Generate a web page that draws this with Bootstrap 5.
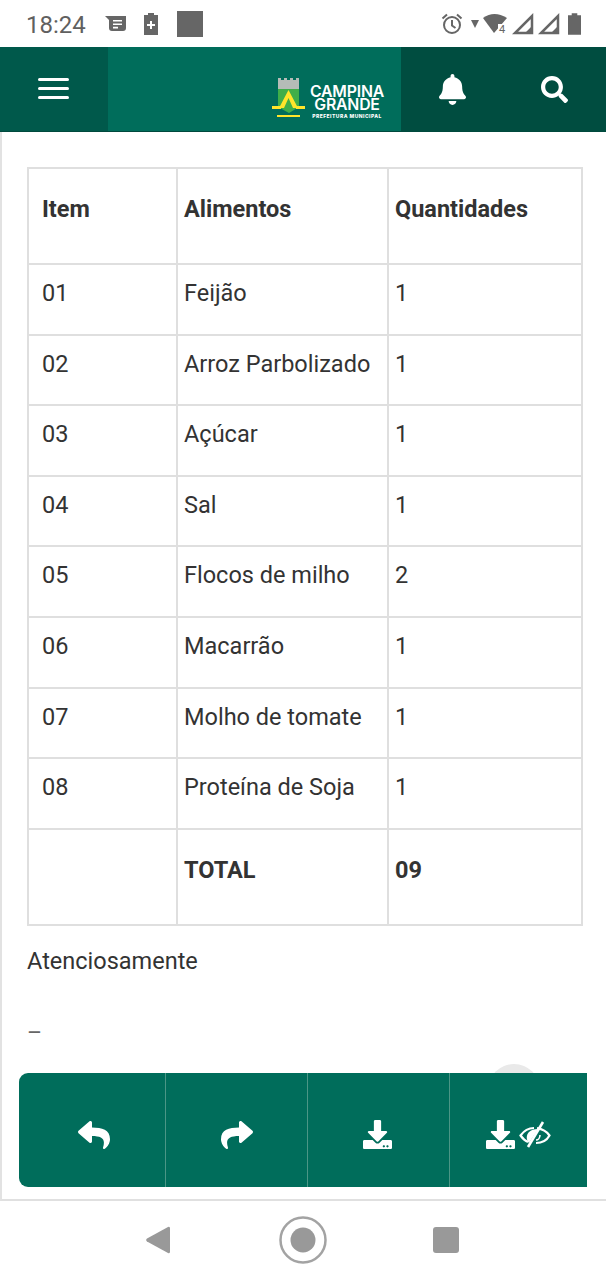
<!DOCTYPE html>
<html lang="pt-BR">
<head>
<meta charset="utf-8">
<title>Campina Grande</title>
<link rel="stylesheet" href="https://cdn.jsdelivr.net/npm/bootstrap@5.3.0/dist/css/bootstrap.min.css">
<style>
html,body{margin:0;padding:0;background:#fff}
.phone{width:606px;height:1280px;overflow:hidden;font-family:Roboto,"Liberation Sans",sans-serif;color:#333}
.statusbar{height:47px;padding:0 25px 0 26px;color:#666}
.clock{font-size:24px;line-height:47px;margin-top:3px;color:#606060;width:71px}
.sq-icon{margin-left:18px}
.topbar{height:85px;background:#006d5b;border-bottom:1px solid #00493d}
.menu-zone{width:108px;background:#00594b}
.logo-zone{width:293px;padding-right:17px}
.logo-mark{margin-top:19px}
.act-zone{width:205px;background:#004d40}
.act-zone>div{width:103px}
.brand-text{color:#fff;font-family:Inter,"Liberation Sans",sans-serif;text-align:center;margin-left:5px;margin-top:27px}
.brand-l{font-size:15.8px;font-weight:600;line-height:13.5px;letter-spacing:-.2px}
.brand-s{font-size:5px;font-weight:800;line-height:9px;letter-spacing:.45px}
.content{height:1069px;border-left:2px solid #e2e2e2;border-bottom:2px solid #e0e0e0;position:relative}
.frame{padding:35px 22px 0 25px}
.data-table{width:556px;table-layout:fixed;margin:0;border-collapse:collapse;font-size:23.5px;--bs-table-color:#333;--bs-table-border-color:#dfdfdf}
.data-table th,.data-table td{border:2px solid #dfdfdf;padding:12px 6px 0;line-height:32px;vertical-align:top;font-weight:400}
.data-table th{font-weight:700}
.data-table .c1{width:149px;padding-left:13px}
.data-table .c2{width:211px}
.head-row{height:96px}
.head-row th{padding-top:24px}
.item-row{height:70.6px}
.total-row{height:96px}
.total-row td{padding-top:24px}
.closing{font-size:23.5px;color:#333;line-height:32px;margin:19px 0 0}
.dash{font-size:23px;line-height:32px;margin:41px 0 0;color:#666}
.action-wrap{position:absolute;left:17px;top:941px;width:568px}
.ghost{position:absolute;left:469px;top:-9px;width:52px;height:52px;border-radius:50%;background:#e9e9e9}
.action-bar{position:relative;height:114px;background:#006d5b;border-radius:9px 0 0 9px;display:grid;grid-template-columns:147px 142px 142px 137px}
.action-bar>div{border-right:1px solid #4b9686;padding-top:9px}
.action-bar>div:last-child{border-right:0}
.reply-icon{margin-left:3px}
.dl-icon{margin-right:2px}
.softkeys{height:78px;padding-left:146px}
.sk-back{width:24px}
.sk-home{width:48px;margin-left:109px}
.sk-recent{width:26px;margin-left:106px}
.sig-first{margin-left:4px}
</style>
</head>
<body>
<div class="phone d-flex flex-column">
  <div class="statusbar d-flex align-items-center">
    <div class="clock">18:24</div>
    <svg class="ms-2" width="22" height="19" viewBox="0 0 22 19" fill="#666"><path d="M0 2h21v12a3 3 0 0 1-3 3H7a3 3 0 0 1-3-3V6z"/><path d="M8 6h9v1.600H8zM8 9.400h9V11H8zM8 12.800h5v1.600H8z" fill="#fff"/></svg>
    <svg class="ms-3" width="16" height="24" viewBox="0 0 16 24" fill="#666"><path d="M5 1h6v2h4v20H1V3h4z"/><path d="M7 9h2v3h3v2H9v3H7v-3H4v-2h3z" fill="#fff"/></svg>
    <svg class="sq-icon" width="26" height="26" viewBox="0 0 26 26"><rect width="26" height="26" fill="#666"/></svg>
    <div class="flex-grow-1"></div>
    <svg width="22" height="22" viewBox="0 0 22 22" fill="none" stroke="#666" stroke-width="2"><circle cx="11" cy="12" r="8"/><path d="M11 7v5.500l3.500 2.500M1.500 5.500 6 1.500M20.500 5.500 16 1.500"/></svg>
    <svg class="ms-2" width="8" height="8" viewBox="0 0 8 8" fill="#666"><path d="M0 0h8L4 8z"/></svg>
    <svg class="ms-1" width="25" height="24" viewBox="0 0 25 24"><path d="M0 6Q11-2 24 6L11 21z" fill="#666"/><path d="M15 12h9v10h-9z" fill="#fff"/><text x="16" y="21" font-size="11" font-family="Roboto" fill="#666">4</text></svg>
    <svg class="sig-first" width="22" height="22" viewBox="0 0 22 22" fill="none" stroke="#666" stroke-width="2.500"><path d="M20 3v17H3z"/><path d="M3 20h17v-7l-7 7z" fill="#666" stroke="none"/></svg>
    <svg class="ms-1" width="22" height="22" viewBox="0 0 22 22" fill="none" stroke="#666" stroke-width="2.500"><path d="M20 3v17H3z"/><path d="M3 20h17v-7l-7 7z" fill="#666" stroke="none"/></svg>
    <svg class="ms-2" width="13" height="22" viewBox="0 0 14 23" fill="#666"><path d="M4 0h6v2h4v21H0V2h4z"/></svg>
  </div>

  <nav class="topbar d-flex">
    <div class="menu-zone d-flex align-items-center justify-content-center">
      <svg width="32" height="22" viewBox="0 0 32 22" fill="#fff"><rect y="0" width="31" height="3" rx="1.500"/><rect y="9" width="31" height="3" rx="1.500"/><rect y="18" width="31" height="3" rx="1.500"/></svg>
    </div>
    <div class="logo-zone d-flex align-items-center justify-content-end">
      <svg class="logo-mark" width="33" height="43" viewBox="0 0 33 43"><path d="M6 1h3v2h3V1h3v2h3V1h3v2h3V1h3v11H6z" fill="#b5bcb7"/><path d="M6 12h21v18l-10 6-11-6z" fill="#3fae49"/><path d="M16.500 13 7 31h5l4.500-10 4.500 10h5z" fill="#ffe52b"/><path d="M0 29h9v3H0zM24 29h9v3h-9zM5 38h23v2H5z" fill="#ffe52b"/></svg>
      <div class="brand-text">
        <div class="brand-l">CAMPINA<br>GRANDE</div>
        <div class="brand-s">PREFEITURA MUNICIPAL</div>
      </div>
    </div>
    <div class="act-zone d-flex">
      <div class="d-flex align-items-center justify-content-center">
        <svg width="27" height="31" viewBox="0 0 448 512" fill="#fff"><path d="M224 512c35.320 0 63.970-28.650 63.970-64H160.030c0 35.350 28.650 64 63.970 64zm215.390-149.710c-19.320-20.760-55.470-51.990-55.470-154.290 0-77.700-54.480-139.900-127.940-155.160V32c0-17.670-14.320-32-31.980-32s-31.980 14.330-31.980 32v20.840C118.560 68.100 64.080 130.300 64.080 208c0 102.300-36.150 133.530-55.470 154.290-6 6.450-8.660 14.160-8.610 21.710.11 16.400 12.980 32 32.100 32h383.800c19.120 0 32-15.600 32.100-32 .05-7.550-2.610-15.270-8.610-21.710z"/></svg>
      </div>
      <div class="d-flex align-items-center justify-content-center">
        <svg width="27" height="27" viewBox="0 0 512 512" fill="#fff"><path d="M505 442.700L405.300 343c-4.500-4.500-10.600-7-17-7H372c27.600-35.300 44-79.700 44-128C416 93.100 322.900 0 208 0S0 93.100 0 208s93.100 208 208 208c48.300 0 92.700-16.400 128-44v16.300c0 6.400 2.500 12.500 7 17l99.700 99.700c9.400 9.400 24.600 9.400 33.900 0l28.300-28.300c9.400-9.400 9.400-24.600.1-34zM208 336c-70.700 0-128-57.200-128-128 0-70.700 57.200-128 128-128 70.700 0 128 57.200 128 128 0 70.700-57.200 128-128 128z"/></svg>
      </div>
    </div>
  </nav>

  <main class="content">
    <div class="frame">
      <table class="table data-table">
        <thead>
          <tr class="head-row"><th class="c1">Item</th><th class="c2">Alimentos</th><th>Quantidades</th></tr>
        </thead>
        <tbody>
          <tr class="item-row"><td class="c1">01</td><td>Feijão</td><td>1</td></tr>
          <tr class="item-row"><td class="c1">02</td><td>Arroz Parbolizado</td><td>1</td></tr>
          <tr class="item-row"><td class="c1">03</td><td>Açúcar</td><td>1</td></tr>
          <tr class="item-row"><td class="c1">04</td><td>Sal</td><td>1</td></tr>
          <tr class="item-row"><td class="c1">05</td><td>Flocos de milho</td><td>2</td></tr>
          <tr class="item-row"><td class="c1">06</td><td>Macarrão</td><td>1</td></tr>
          <tr class="item-row"><td class="c1">07</td><td>Molho de tomate</td><td>1</td></tr>
          <tr class="item-row"><td class="c1">08</td><td>Proteína de Soja</td><td>1</td></tr>
          <tr class="total-row"><td class="c1"></td><td class="fw-bold">TOTAL</td><td class="fw-bold">09</td></tr>
        </tbody>
      </table>
      <p class="closing mb-0">Atenciosamente</p>
      <p class="dash mb-0">–</p>
    </div>
    <div class="action-wrap">
      <div class="ghost"></div>
      <div class="action-bar">
        <div class="d-flex align-items-center justify-content-center">
          <svg class="reply-icon" width="32" height="32" viewBox="0 0 512 512" fill="#fff"><path d="M8.309 189.836L184.313 37.851C199.719 24.546 224 35.347 224 56.015v80.053c160.629 1.839 288 34.032 288 186.258 0 61.441-39.581 122.309-83.333 154.132-13.653 9.931-33.111-2.533-28.077-18.631 45.344-145.012-21.507-183.510-176.590-185.742V360c0 20.700-24.300 31.453-39.687 18.164l-176.004-152c-11.071-9.562-11.086-26.753 0-36.328z"/></svg>
        </div>
        <div class="d-flex align-items-center justify-content-center">
          <svg width="32" height="32" viewBox="0 0 512 512" fill="#fff"><path d="M503.691 189.836L327.687 37.851C312.281 24.546 288 35.347 288 56.015v80.053C127.371 137.907 0 170.100 0 322.326c0 61.441 39.581 122.309 83.333 154.132 13.653 9.931 33.111-2.533 28.077-18.631C66.066 312.814 132.917 274.316 288 272.085V360c0 20.700 24.300 31.453 39.687 18.164l176.004-152c11.071-9.562 11.086-26.753 0-36.328z"/></svg>
        </div>
        <div class="d-flex align-items-center justify-content-center">
          <svg class="dl-icon" width="29" height="29" viewBox="0 0 512 512" fill="#fff"><path d="M216 0h80c13.300 0 24 10.700 24 24v168h87.700c17.800 0 26.700 21.500 14.100 34.100L269.700 378.300c-7.500 7.500-19.800 7.500-27.300 0L90.100 226.100c-12.600-12.600-3.700-34.100 14.100-34.100H192V24c0-13.300 10.700-24 24-24zm296 376v112c0 13.300-10.700 24-24 24H24c-13.300 0-24-10.700-24-24V376c0-13.300 10.700-24 24-24h146.700l49 49c20.100 20.100 52.500 20.100 72.600 0l49-49H488c13.300 0 24 10.700 24 24zm-124 88c0-11-9-20-20-20s-20 9-20 20 9 20 20 20 20-9 20-20zm64 0c0-11-9-20-20-20s-20 9-20 20 9 20 20 20 20-9 20-20z"/></svg>
        </div>
        <div class="d-flex align-items-center justify-content-center">
          <svg width="29" height="29" viewBox="0 0 512 512" fill="#fff"><path d="M216 0h80c13.300 0 24 10.700 24 24v168h87.700c17.800 0 26.700 21.500 14.100 34.100L269.700 378.300c-7.500 7.500-19.800 7.500-27.300 0L90.100 226.100c-12.600-12.600-3.700-34.100 14.100-34.100H192V24c0-13.300 10.700-24 24-24zm296 376v112c0 13.300-10.700 24-24 24H24c-13.300 0-24-10.700-24-24V376c0-13.300 10.700-24 24-24h146.700l49 49c20.100 20.100 52.500 20.100 72.600 0l49-49H488c13.300 0 24 10.700 24 24zm-124 88c0-11-9-20-20-20s-20 9-20 20 9 20 20 20 20-9 20-20zm64 0c0-11-9-20-20-20s-20 9-20 20 9 20 20 20 20-9 20-20z"/></svg>
          <svg class="ms-1" width="32" height="28" viewBox="0 0 32 28" fill="none" stroke="#fff" stroke-width="2.200"><path d="M15 7C9 7 4 11 1.500 14.500 4 18 6.500 20 9 21"/><path d="M18 7.200C23 8 28 11 30.500 14.500 28 19 23 22 17 22"/><path d="M24 1 9 26" stroke-width="2.600"/><path d="M19 8 10 22c-3-3-3-8 0-11 2-2 5-3 9-3z" fill="#fff" stroke="none"/><path d="M21 14c0 3-2 5-4 5" stroke-width="1.600"/></svg>
        </div>
      </div>
    </div>
  </main>

  <div class="softkeys d-flex align-items-center">
    <svg class="sk-back" width="24" height="28" viewBox="0 0 24 28" fill="#999"><path d="M22 1a1.500 1.500 0 0 1 2 1v24a1.500 1.500 0 0 1-2 1L1 15.500a2 2 0 0 1 0-3z"/></svg>
    <svg class="sk-home" width="48" height="48" viewBox="0 0 48 48"><circle cx="24" cy="24" r="22.500" fill="none" stroke="#a3a3a3" stroke-width="2.500"/><circle cx="24" cy="24" r="12.500" fill="#999"/></svg>
    <svg class="sk-recent" width="26" height="26" viewBox="0 0 26 26"><rect width="26" height="26" rx="3" fill="#999"/></svg>
  </div>
</div>
<script src="https://cdn.jsdelivr.net/npm/bootstrap@5.3.0/dist/js/bootstrap.bundle.min.js"></script>
</body>
</html>
